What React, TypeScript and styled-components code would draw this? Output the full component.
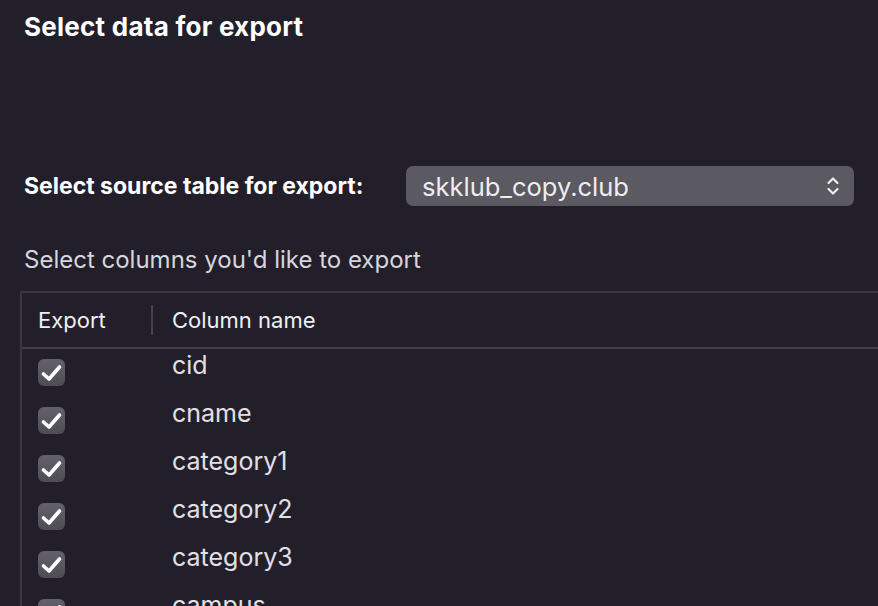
import React from "react";
import styled, { createGlobalStyle } from "styled-components";

const Global = createGlobalStyle`
  html, body { margin: 0; padding: 0; background: #221f2b; }
  body { font-family: Inter, "Noto Sans", sans-serif; overflow: hidden; }
`;

const Page = styled.div`
  width: 878px;
  height: 606px;
  overflow: hidden;
  background: #221f2b;
  padding: 10px 0 0 24px;
  box-sizing: border-box;
  display: flex;
  flex-direction: column;
`;

const Title = styled.h1`
  margin: 0;
  font-size: 26px;
  line-height: 32px;
  font-weight: 700;
  color: #ffffff;
  letter-spacing: 0.25px;
  padding-top: 1px;
  height: 32px;
`;

const SourceRow = styled.div`
  display: flex;
  align-items: center;
  margin-top: 123px;
`;

const Label = styled.label`
  font-size: 23px;
  font-weight: 700;
  color: #ffffff;
  width: 382px;
  white-space: nowrap;
`;

const SelectBox = styled.div`
  width: 448px;
  height: 40px;
  border-radius: 7px;
  background: #5b5961;
  display: flex;
  align-items: center;
  justify-content: space-between;
  padding: 0 14px 0 16px;
  box-sizing: border-box;
  color: #eeedf0;
  font-size: 25.5px;
`;

const Description = styled.p`
  margin: 40px 0 0;
  font-size: 24px;
  line-height: 28px;
  color: #d8d6dc;
`;

const Table = styled.div`
  margin: 17px 0 0 -4px;
  border-top: 2px solid #38373d;
  border-left: 2px solid #38373d;
  flex: 1;
`;

const HeaderRow = styled.div`
  display: grid;
  grid-template-columns: 134px 1fr;
  height: 54px;
  align-items: center;
  padding-left: 16px;
  border-bottom: 2px solid #403e46;
`;

const HeaderCell = styled.div<{ $divider?: boolean }>`
  font-size: 22px;
  color: #f0eff2;
  height: 30px;
  display: flex;
  align-items: center;
  position: relative;
  ${(p) =>
    p.$divider &&
    `&::before { content: ""; position: absolute; left: -21px; top: 0; bottom: 0; width: 2px; background: #44424a; }`}
`;

const Row = styled.div`
  display: grid;
  grid-template-columns: 134px 1fr;
  height: 48px;
  padding-left: 16px;
  align-items: start;
`;

const Check = styled.div`
  width: 27px;
  height: 27px;
  margin-top: 10px;
  border-radius: 6px;
  background: linear-gradient(#636169, #4e4c54);
  display: flex;
  align-items: center;
  justify-content: center;
`;

const ColName = styled.div`
  font-size: 25px;
  line-height: 30px;
  margin-top: 1px;
  color: #e2e0e5;
`;

const Chevrons = () => (
  <svg width="14" height="24" viewBox="0 0 14 24" fill="none">
    <path d="M2.5 9 L7 4.5 L11.5 9" stroke="#ececee" strokeWidth="2.2" strokeLinecap="round" strokeLinejoin="round" />
    <path d="M2.5 15 L7 19.5 L11.5 15" stroke="#ececee" strokeWidth="2.2" strokeLinecap="round" strokeLinejoin="round" />
  </svg>
);

const CheckMark = () => (
  <svg width="21" height="18" viewBox="0 0 21 18" fill="none">
    <path d="M2.5 10 L8 15 L18.5 3" stroke="#ffffff" strokeWidth="3.6" strokeLinecap="round" strokeLinejoin="round" />
  </svg>
);

const columns = ["cid", "cname", "category1", "category2", "category3", "campus"];

export default function App() {
  return (
    <>
      <Global />
      <Page>
        <Title>Select data for export</Title>
        <SourceRow>
          <Label>Select source table for export:</Label>
          <SelectBox>
            <span>skklub_copy.club</span>
            <Chevrons />
          </SelectBox>
        </SourceRow>
        <Description>Select columns you'd like to export</Description>
        <Table>
          <HeaderRow>
            <HeaderCell>Export</HeaderCell>
            <HeaderCell $divider>Column name</HeaderCell>
          </HeaderRow>
          {columns.map((c) => (
            <Row key={c}>
              <Check>
                <CheckMark />
              </Check>
              <ColName>{c}</ColName>
            </Row>
          ))}
        </Table>
      </Page>
    </>
  );
}
